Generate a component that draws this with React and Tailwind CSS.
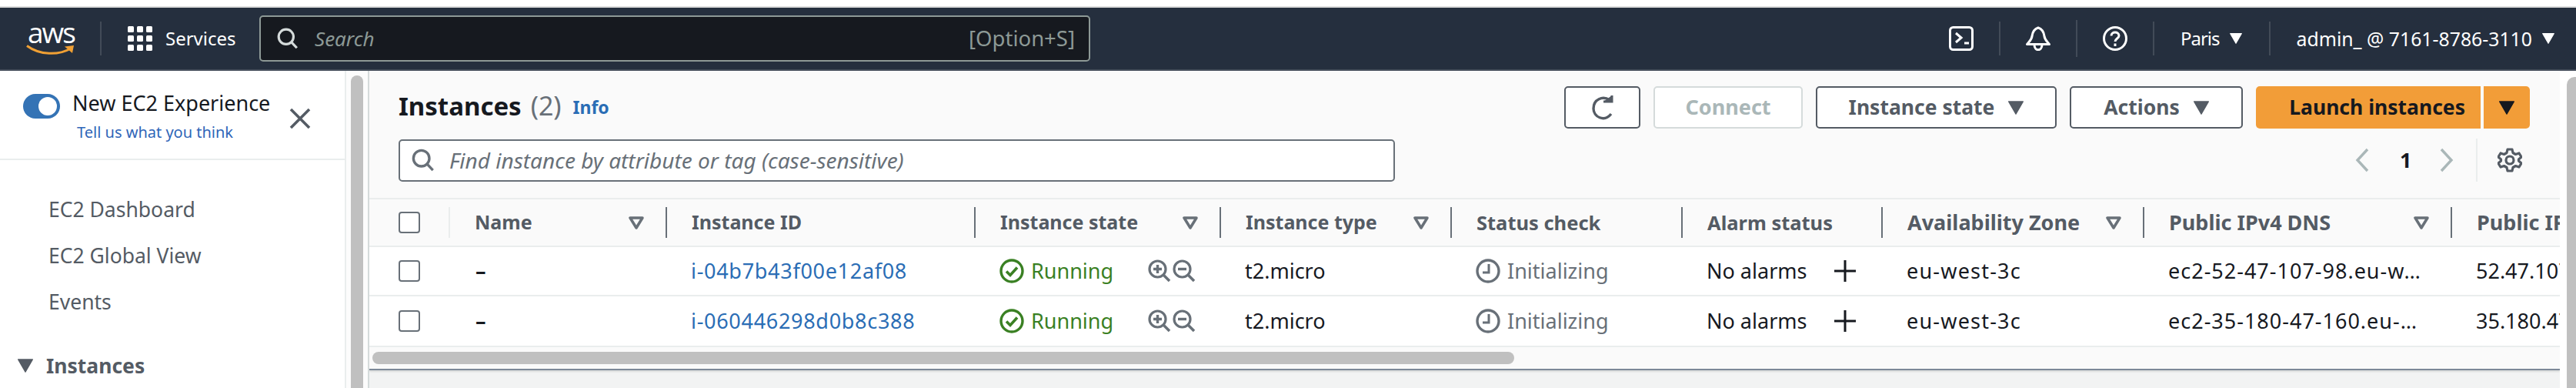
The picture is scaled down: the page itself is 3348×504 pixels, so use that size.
const FONT = '"Noto Sans", "Open Sans", sans-serif';

function Caret({ color = "#fff", w = 16, h = 14 }) {
  return (
    <svg width={w} height={h} viewBox="0 0 16 14" className="shrink-0">
      <path d="M0.5 0.5H15.5L8 13.5Z" fill={color} stroke={color} strokeLinejoin="round" />
    </svg>
  );
}

function Funnel() {
  return (
    <svg width="20" height="17" viewBox="0 0 20 17" className="shrink-0">
      <path d="M2 2H18L10 15Z" fill="none" stroke="#687078" strokeWidth="3.5" strokeLinejoin="round" />
    </svg>
  );
}

function SearchIcon({ color, size = 32 }) {
  return (
    <svg width={size} height={size} viewBox="0 0 32 32" fill="none" stroke={color} strokeWidth="3.6" className="shrink-0">
      <circle cx="13.5" cy="13.5" r="11" />
      <path d="M21.5 21.5L29.5 30" />
    </svg>
  );
}

function Checkbox() {
  return <div className="w-[28px] h-[28px] shrink-0 bg-white border-2 border-[#687078] rounded-[4px]" />;
}

function Zoom({ minus }) {
  return (
    <svg width="30" height="30" viewBox="0 0 30 30" fill="none" stroke="#687078" className="shrink-0">
      <circle cx="12.5" cy="12.5" r="10.5" strokeWidth="3.2" />
      <path d="M20 20L28 28" strokeWidth="3.6" />
      <path d={minus ? "M7 12.5H18" : "M7 12.5H18M12.5 7V18"} strokeWidth="3.4" />
    </svg>
  );
}

function Running() {
  return (
    <svg width="32" height="32" viewBox="0 0 32 32" fill="none" stroke="#3a8023" strokeWidth="3.4" className="shrink-0">
      <circle cx="16" cy="16" r="14" />
      <path d="M9 16.5L14 21.5L23 11.5" strokeWidth="3.6" />
    </svg>
  );
}

function Clock() {
  return (
    <svg width="32" height="32" viewBox="0 0 32 32" fill="none" stroke="#687078" strokeWidth="3.4" className="shrink-0">
      <circle cx="16" cy="16" r="14" />
      <path d="M17 7V18H9" strokeWidth="3" />
    </svg>
  );
}

function NavDivider({ tall }) {
  return <div className={tall ? "w-[2px] h-[48px] bg-[#424b58] shrink-0" : "w-[2px] h-[44px] bg-[#424b58] shrink-0"} />;
}

function TopBar() {
  return (
    <div className="h-[82px] shrink-0 bg-[#252f3e] border-b-2 border-[#454e5b] flex items-center text-white">
      <div className="w-[130px] shrink-0 pl-[34px] flex flex-col">
        <span className="text-[37px] leading-[26px] h-[29px] tracking-[-2px] pl-[2px]" style={{ fontFamily: '"Open Sans", sans-serif' }}>aws</span>
        <svg width="64" height="14" viewBox="0 0 64 14" fill="none">
          <path d="M1 1.5C18 14 42 14 58 5" stroke="#f0a034" strokeWidth="3" />
          <path d="M50 2.5L62 1L60 11" fill="#f0a034" />
        </svg>
      </div>
      <NavDivider />
      <svg width="32" height="32" viewBox="0 0 32 32" fill="#fff" className="ml-[34px] shrink-0">
        <rect x="0" y="0" width="8" height="8" rx="1.5" /><rect x="12" y="0" width="8" height="8" rx="1.5" /><rect x="24" y="0" width="8" height="8" rx="1.5" />
        <rect x="0" y="12" width="8" height="8" rx="1.5" /><rect x="12" y="12" width="8" height="8" rx="1.5" /><rect x="24" y="12" width="8" height="8" rx="1.5" />
        <rect x="0" y="24" width="8" height="8" rx="1.5" /><rect x="12" y="24" width="8" height="8" rx="1.5" /><rect x="24" y="24" width="8" height="8" rx="1.5" />
      </svg>
      <span className="ml-[17px] w-[122px] shrink-0 text-[24px] leading-none">Services</span>
      <div className="w-[1080px] h-[60px] shrink-0 bg-[#16191f] border-2 border-[#8d9996] rounded-[5px] flex items-center pl-[21px] pr-[18px]">
        <SearchIcon color="#d5dbdb" size={28} />
        <span className="ml-[21px] italic text-[26px] text-[#8d9996] leading-none">Search</span>
        <span className="ml-auto text-[27.5px] text-[#8d9996] leading-none">[Option+S]</span>
      </div>
      <div className="ml-auto flex items-center shrink-0">
        <svg width="32" height="32" viewBox="0 0 32 32" fill="none" stroke="#fff" strokeWidth="3">
          <rect x="1.5" y="1.5" width="29" height="29" rx="4" />
          <path d="M9 9L16 15L9 21" strokeWidth="3" />
          <path d="M20 22H26" strokeWidth="3" />
        </svg>
        <div className="w-[33px]" />
        <NavDivider />
        <div className="w-[33px]" />
        <svg width="32" height="32" viewBox="0 0 32 32" fill="none" stroke="#fff" strokeWidth="3" strokeLinejoin="round">
          <path d="M16 2C10 4 8.5 9 8 13C7.5 18 4 20 1.5 23.5H30.5C28 20 24.5 18 24 13C23.5 9 22 4 16 2Z" />
          <path d="M11 24C11 33 21 33 21 24" />
        </svg>
        <div className="w-[33px]" />
        <NavDivider tall />
        <div className="w-[33px]" />
        <svg width="32" height="32" viewBox="0 0 32 32" fill="none" stroke="#fff" strokeWidth="3">
          <circle cx="16" cy="16" r="14.5" />
          <path d="M11 12.5C11 6.5 21 6.5 21 12.5C21 16 16 16 16 20" />
          <path d="M16 22.5V26" />
        </svg>
        <div className="w-[33px]" />
        <NavDivider />
        <span className="ml-[34px] text-[24px] leading-none tracking-[-1px]">Paris</span>
        <div className="ml-[13px] mr-[35px]"><Caret /></div>
        <NavDivider />
        <span className="ml-[34px] text-[24.8px] leading-none whitespace-nowrap">admin_ @ 7161-8786-3110</span>
        <div className="ml-[13px] mr-[28px]"><Caret /></div>
      </div>
    </div>
  );
}

function Sidebar() {
  return (
    <div className="w-[448px] shrink-0 bg-white flex flex-col">
      <div className="h-[116px] shrink-0 border-b-2 border-[#eaeded] relative">
        <div className="absolute left-[30px] top-[30px] w-[48px] h-[32px] rounded-full bg-[#3473b5] flex items-center justify-end pr-[4px]">
          <div className="w-[24px] h-[24px] rounded-full bg-white" />
        </div>
        <div className="pl-[94px] pt-[24px] text-[27px] leading-[36px] text-[#16191f] whitespace-nowrap">New EC2 Experience</div>
        <div className="pl-[100px] pt-[6px] text-[20px] leading-[28px] text-[#2f66b8] whitespace-nowrap">Tell us what you think</div>
        <svg width="28" height="28" viewBox="0 0 28 28" className="absolute left-[376px] top-[48px]" stroke="#545b64" strokeWidth="3.6">
          <path d="M2 2L26 26M26 2L2 26" />
        </svg>
      </div>
      <div className="pl-[63px] text-[#545b64] text-[26.5px] leading-[60px] pt-[34px]">
        <div>EC2 Dashboard</div>
        <div>EC2 Global View</div>
        <div>Events</div>
      </div>
      <div className="pl-[23px] pt-[35px] flex items-center gap-[17px] text-[#545b64] font-bold text-[26.5px] leading-[36px]">
        <Caret color="#545b64" w={20} h={18} />
        <span>Instances</span>
      </div>
    </div>
  );
}

function Scroll() {
  return (
    <div className="w-[32px] shrink-0 bg-[#fcfcfc] border-x-2 border-l-[#eaeded] border-r-[#d5dbdb] pt-[6px] pl-[6px]">
      <div className="w-[16px] h-full bg-[#c0c0c0] rounded-t-full" />
    </div>
  );
}

function Btn({ w, disabled, children }) {
  return (
    <div
      className={
        disabled
          ? "h-[55px] shrink-0 bg-white border-2 border-[#d5dbdb] rounded-[5px] flex items-center justify-center gap-[18px] text-[#aab7b8] font-bold text-[27px]"
          : "h-[55px] shrink-0 bg-white border-2 border-[#545b64] rounded-[5px] flex items-center justify-center gap-[18px] text-[#545b64] font-bold text-[26.5px]"
      }
      style={{ width: w }}
    >
      {children}
    </div>
  );
}

const COLS = [
  { w: 105 },
  { w: 280, t: "Name", f: 1, c: "text-[25px]" },
  { w: 401, t: "Instance ID", c: "text-[25px]" },
  { w: 319, t: "Instance state", f: 1, c: "text-[25px]" },
  { w: 300, t: "Instance type", f: 1, c: "text-[25px]" },
  { w: 300, t: "Status check", c: "text-[25.5px]" },
  { w: 260, t: "Alarm status", c: "text-[25.5px]" },
  { w: 340, t: "Availability Zone", f: 1, c: "text-[27px]" },
  { w: 400, t: "Public IPv4 DNS", f: 1, c: "text-[27px]" },
  { w: 300, t: "Public IPv4 address", c: "text-[27px]" },
];

const ROWS = [
  { id: "i-04b7b43f00e12af08", dns: "ec2-52-47-107-98.eu-w…", ip: "52.47.107.98" },
  { id: "i-060446298d0b8c388", dns: "ec2-35-180-47-160.eu-…", ip: "35.180.47.160" },
];

function Table() {
  return (
    <div className="flex flex-col overflow-hidden border-t-2 border-[#eaeded]">
      <div className="h-[62px] shrink-0 flex items-center bg-[#fafafa] border-b-2 border-[#eaeded]">
        <div className="h-[40px] w-[105px] shrink-0 pl-[38px] border-r-2 border-[#eaeded] flex items-center"><Checkbox /></div>
        {COLS.slice(1).map((c, i) => (
          <div
            key={c.t}
            className={(i === 0
              ? "h-[40px] shrink-0 pl-[32px] pr-[28px] flex items-center justify-between font-bold text-[#545b64] whitespace-nowrap overflow-hidden "
              : "h-[40px] shrink-0 pl-[32px] pr-[28px] flex items-center justify-between font-bold text-[#545b64] whitespace-nowrap overflow-hidden border-l-2 border-[#687078] ") + c.c}
            style={{ width: c.w }}
          >
            <span>{c.t}</span>
            {c.f ? <Funnel /> : null}
          </div>
        ))}
      </div>
      {ROWS.map((r, i) => (
        <div key={r.id} className={i === 0 ? "h-[64px] shrink-0 flex items-center bg-white border-b-2 border-[#eaeded] text-[27px] text-[#16191f] whitespace-nowrap" : "h-[66px] shrink-0 flex items-center bg-white border-b-2 border-[#eaeded] text-[27px] text-[#16191f] whitespace-nowrap"}>
          <div className="w-[105px] shrink-0 pl-[38px]"><Checkbox /></div>
          <div className="w-[280px] shrink-0 pl-[33px] font-bold">–</div>
          <div className="w-[401px] shrink-0 pl-[33px] text-[#2a6db5] tracking-[0.7px]">{r.id}</div>
          <div className="w-[319px] shrink-0 pl-[33px] flex items-center text-[#3a8023]">
            <Running />
            <span className="ml-[9px] w-[152px]">Running</span>
            <Zoom />
            <div className="w-[2px]" />
            <Zoom minus />
          </div>
          <div className="w-[300px] shrink-0 pl-[33px]">t2.micro</div>
          <div className="w-[300px] shrink-0 pl-[33px] flex items-center text-[#687078]">
            <Clock />
            <span className="ml-[9px]">Initializing</span>
          </div>
          <div className="w-[260px] shrink-0 pl-[33px] flex items-center">
            <span className="w-[166px]">No alarms</span>
            <svg width="28" height="28" viewBox="0 0 28 28" stroke="#16191f" strokeWidth="3"><path d="M0 14H28M14 0V28" /></svg>
          </div>
          <div className="w-[340px] shrink-0 pl-[33px] tracking-[1.2px]">eu-west-3c</div>
          <div className="w-[400px] shrink-0 pl-[33px] tracking-[1px]">{r.dns}</div>
          <div className="w-[300px] shrink-0 pl-[33px]">{r.ip}</div>
        </div>
      ))}
      <div className="h-[28px] shrink-0 bg-[#fafafa] pl-[4px] pt-[6px]">
        <div className="w-[1484px] h-[16px] rounded-full bg-[#c0c0c0]" />
      </div>
    </div>
  );
}

function Main() {
  return (
    <div className="w-[2847px] shrink-0 bg-[#f2f3f3] flex flex-col overflow-hidden">
      <div className="bg-[#fafafa] border-b-2 border-[#7d8998] shadow-[0_2px_2px_rgba(0,0,0,0.1)]">
        <div className="pl-[38px] pr-[39px] pt-[20px] pb-[21px] flex flex-col gap-[13px]">
          <div className="flex items-center h-[55px]">
            <span className="font-bold text-[33px] text-[#16191f] -translate-y-[2px]">Instances</span>
            <span className="ml-[12px] text-[34px] text-[#687078] -translate-y-[2px]">(2)</span>
            <span className="ml-[15px] font-bold text-[23px] text-[#2a6db5]">Info</span>
            <div className="ml-auto flex gap-[17px]">
              <Btn w={99}>
                <svg width="30" height="34" viewBox="0 0 30 34" fill="none" stroke="#545b64" strokeWidth="3.4">
                  <path d="M24 7C15 1 3 6 3 18C3 29 17 36 26 25" />
                  <path d="M16 9H27V1" strokeWidth="3" fill="#545b64" />
                </svg>
              </Btn>
              <Btn w={194} disabled>Connect</Btn>
              <Btn w={313}>Instance state<Caret color="#545b64" w={20} h={18} /></Btn>
              <Btn w={225}>Actions<Caret color="#545b64" w={20} h={18} /></Btn>
              <div className="flex gap-[4px] font-bold text-[26.5px] text-[#16191f]">
                <div className="w-[292px] h-[55px] bg-[#f29d38] rounded-l-[5px] flex items-center justify-end pr-[20px]">Launch instances</div>
                <div className="w-[60px] h-[55px] bg-[#f29d38] rounded-r-[5px] flex items-center justify-center"><Caret color="#16191f" w={20} h={18} /></div>
              </div>
            </div>
          </div>
          <div className="flex items-center h-[56px]">
            <div className="w-[1295px] h-[55px] bg-white border-2 border-[#687078] rounded-[5px] flex items-center pl-[15px]">
              <SearchIcon color="#687078" size={30} />
              <span className="ml-[19px] italic text-[28px] text-[#687078]">Find instance by attribute or tag (case-sensitive)</span>
            </div>
            <div className="ml-auto flex items-center h-full">
              <svg width="18" height="32" viewBox="0 0 18 32" fill="none" stroke="#aab7b8" strokeWidth="3.4"><path d="M16 2L3 16L16 30" /></svg>
              <span className="ml-[40px] w-[11px] font-bold text-[27px] text-[#16191f]">1</span>
              <svg width="18" height="32" viewBox="0 0 18 32" fill="none" stroke="#aab7b8" strokeWidth="3.4" className="ml-[41px]"><path d="M2 2L15 16L2 30" /></svg>
              <div className="ml-[29px] w-[2px] h-full bg-[#eaeded]" />
              <svg width="32" height="32" viewBox="0 0 32 32" fill="none" stroke="#545b64" strokeWidth="3.2" strokeLinejoin="round" className="ml-[26px] mr-[10px]">
                <circle cx="16" cy="16" r="5" />
                <path d="M13 2H19L20 6.5L23.5 8.5L28 7L31 12L27.5 15V17L31 20L28 25L23.5 23.5L20 25.5L19 30H13L12 25.5L8.5 23.5L4 25L1 20L4.5 17V15L1 12L4 7L8.5 8.5L12 6.5Z" />
              </svg>
            </div>
          </div>
        </div>
        <Table />
      </div>
    </div>
  );
}

export default function App() {
  return (
    <div className="w-[3348px] h-[504px] overflow-hidden bg-white flex flex-col" style={{ fontFamily: FONT }}>
      <div className="h-[8px] shrink-0 bg-white" />
      <div className="h-[2px] shrink-0 bg-[#dddddd]" />
      <TopBar />
      <div className="flex-1 flex min-h-0">
        <Sidebar />
        <Scroll />
        <Main />
        <div className="flex-1 bg-white pt-[8px] pl-[9px]">
          <div className="h-full bg-[#c0c0c0] rounded-tl-[10px]" />
        </div>
      </div>
    </div>
  );
}
